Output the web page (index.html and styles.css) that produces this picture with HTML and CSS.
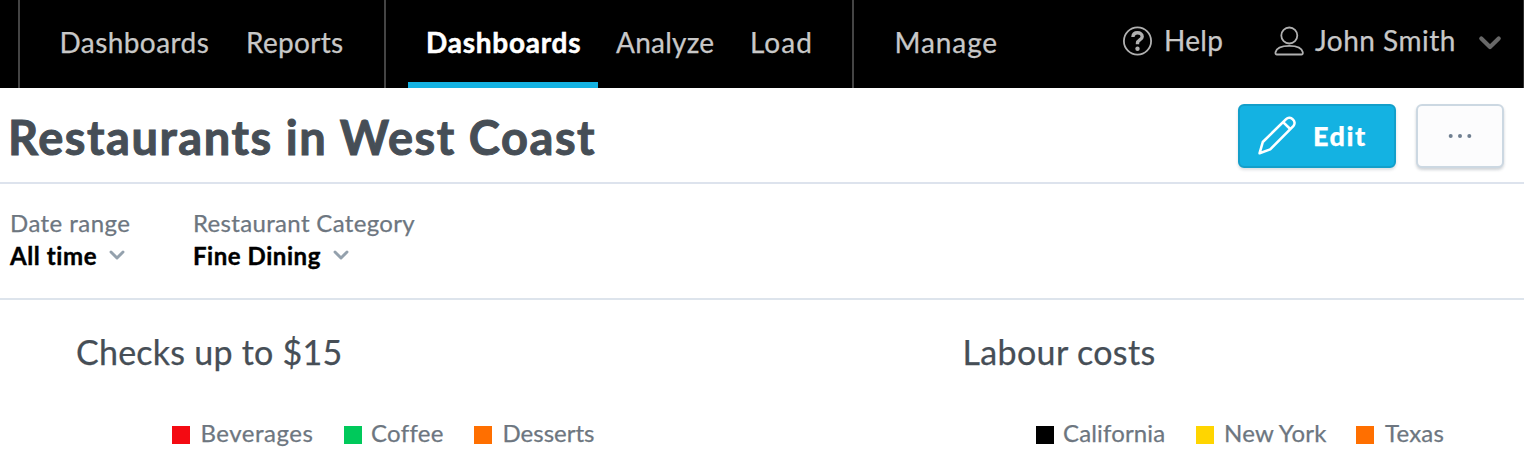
FILE: index.html
```html
<!DOCTYPE html>
<html lang="en">
<head>
<meta charset="utf-8">
<title>Restaurants in West Coast</title>
<link rel="stylesheet" href="styles.css">
</head>
<body>
<header class="topbar">
  <nav class="group group-first">
    <a class="nav-item w-dash"><span class="t-dash">Dashboards</span></a>
    <a class="nav-item w-reports"><span class="t-reports">Reports</span></a>
  </nav>
  <nav class="group group-main">
    <a class="nav-item w-active active"><span class="t-active">Dashboards</span></a>
    <a class="nav-item w-analyze"><span class="t-analyze">Analyze</span></a>
    <a class="nav-item w-load"><span class="t-load">Load</span></a>
  </nav>
  <nav class="group group-manage">
    <a class="nav-item"><span class="t-manage">Manage</span></a>
  </nav>
  <div class="account">
    <a class="help">
      <svg class="icon-help" width="30" height="30" viewBox="0 0 30 30" fill="none" stroke="#b0b0b0">
        <circle cx="14.500" cy="15" r="13.6" stroke-width="1.8"/>
        <path d="M9.900 11c.2-2.800 2-4.200 4.600-4.200s4.700 1.400 4.700 3.900c0 3.200-4.700 3.200-4.700 6.200v1.300" stroke-width="3.400"/>
        <circle cx="14.500" cy="22.700" r="2.200" fill="#b0b0b0" stroke="none"/>
      </svg>
      <span class="t-help">Help</span>
    </a>
    <a class="user">
      <svg class="icon-user" width="30" height="30" viewBox="0 0 30 30" fill="none" stroke="#b0b0b0" stroke-width="1.800">
        <circle cx="15.300" cy="9.500" r="8"/>
        <path d="M3 28.500c-1.200 0-1.700-.9-1.500-2.200C2.400 21.900 7.600 19.800 15.300 19.800s12.600 2.100 13.500 6.500c.2 1.300-.3 2.200-1.500 2.200z"/>
      </svg>
      <span class="t-user">John Smith</span>
      <svg class="icon-caret" width="24" height="16" viewBox="0 0 24 16" fill="none" stroke="#686868" stroke-width="4.200" stroke-linecap="round" stroke-linejoin="round"><path d="M3.300 3.500 12 12l8.700-8.500"/></svg>
    </a>
  </div>
</header>
<section class="titlebar">
  <h1 class="title">Restaurants in West Coast</h1>
  <div class="actions">
    <button class="btn btn-edit">
      <svg class="icon-pencil" width="40" height="40" viewBox="0 0 40 40" fill="none" stroke="#fff" stroke-width="2.600" stroke-linejoin="round"><path d="M1.600 37.200l3.200-11.200L28.100 3.100c4.300-4 11.200 2.400 7.200 7L12.200 33.400z"/><path d="M25.100 6.100l7.400 7.200"/></svg>
      <span class="t-edit">Edit</span>
    </button>
    <button class="btn btn-more" aria-label="More">
      <svg width="24" height="6" viewBox="0 0 24 6" fill="#6f7f90"><circle cx="2.700" cy="3" r="2"/><circle cx="12" cy="3" r="2"/><circle cx="21.300" cy="3" r="2"/></svg>
    </button>
  </div>
</section>
<section class="filters">
  <div class="filter filter-date">
    <span class="label t-date">Date range</span>
    <span class="value"><span class="t-all">All time</span><svg class="chev" width="16" height="10" viewBox="0 0 16 10"><path d="M2 2l6 6 6-6"/></svg></span>
  </div>
  <div class="filter">
    <span class="label t-cat">Restaurant Category</span>
    <span class="value"><span class="t-fine">Fine Dining</span><svg class="chev" width="16" height="10" viewBox="0 0 16 10"><path d="M2 2l6 6 6-6"/></svg></span>
  </div>
</section>
<main class="widgets">
  <article class="widget checks">
    <h2 class="heading t-checks">Checks up to $15</h2>
    <ul class="legend">
      <li class="k-bev"><i class="swatch red"></i><span class="t-bev">Beverages</span></li>
      <li class="k-cof"><i class="swatch green"></i><span class="t-cof">Coffee</span></li>
      <li><i class="swatch orange"></i><span class="t-des">Desserts</span></li>
    </ul>
  </article>
  <article class="widget labour">
    <h2 class="heading t-labour">Labour costs</h2>
    <ul class="legend">
      <li class="k-cal"><i class="swatch black"></i><span class="t-cal">California</span></li>
      <li class="k-ny"><i class="swatch yellow"></i><span class="t-ny">New York</span></li>
      <li><i class="swatch orange"></i><span class="t-tex">Texas</span></li>
    </ul>
  </article>
</main>
</body>
</html>
```
FILE: styles.css
```css
* { box-sizing: border-box; }
body { margin: 0; height: 456px; overflow: hidden; background: #fff; font-family: Lato, "Open Sans", sans-serif; white-space: nowrap; font-variant-ligatures: none; -webkit-text-stroke: .25px; }
h1, h2, ul { margin: 0; padding: 0; font-weight: inherit; }
svg { flex: none; display: block; }

.topbar { display: flex; height: 88px; padding-left: 18px; background: #000; color: #c8c8c8; font-size: 28px; line-height: 34px; border-right: 1px solid #303030; }
.group { display: flex; flex: none; border-left: 2px solid #444; }
.group-first { width: 366px; padding-left: 22px; }
.group-main { width: 468px; padding-left: 22px; }
.group-manage { width: 250px; padding-left: 23px; }
.nav-item { display: flex; flex: none; height: 88px; padding: 25px 0 0 18px; }
.w-dash { width: 186px; }
.w-dash, .group-manage .nav-item { padding-left: 17.5px; }
.w-active { width: 190px; }
.w-analyze { width: 134px; }
.active { color: #fff; font-weight: 700; border-bottom: 6px solid #14b2e2; -webkit-text-stroke: .5px; }
.t-dash { letter-spacing: .42px; }
.t-reports { letter-spacing: .3px; }
.t-active { letter-spacing: .75px; }
.t-analyze { letter-spacing: .25px; }
.t-load { letter-spacing: 1px; }
.t-manage { letter-spacing: .9px; }
.account { display: flex; flex: 1; padding: 23px 0 0 21px; }
.help { display: flex; width: 151px; }
.user { display: flex; }
.icon-help, .icon-user { margin: 3px 11px 0 0; }
.t-help { letter-spacing: .3px; }
.t-user { width: 164px; letter-spacing: .5px; }
.icon-caret { margin-top: 12px; margin-left: -1px; }

.titlebar { display: flex; justify-content: space-between; height: 96px; padding: 16px 20px 0 8px; border-bottom: 2px solid #dde3ed; }
.title { color: #464e56; font-size: 47px; font-weight: 700; line-height: 66px; letter-spacing: 1.55px; -webkit-text-stroke: 1px; }
.actions { display: flex; gap: 20px; }
.btn { display: flex; align-items: center; height: 64px; border-radius: 6px; font: inherit; padding: 0; }
.btn-edit { width: 158px; padding-left: 18px; background: #14b2e2; border: 2px solid #139fca; color: #fff; font-size: 27px; font-weight: 900; box-shadow: 0 2px 3px rgba(20, 40, 60, .15); }
.icon-pencil { margin-right: 15px; }
.t-edit { padding-bottom: 2px; letter-spacing: 1.5px; }
.btn-more { width: 88px; justify-content: center; background: #fcfcfd; border: 2px solid #ccd8e2; box-shadow: 0 2px 3px rgba(20, 40, 60, .2); }

.filters { display: flex; height: 116px; padding: 23px 0 0 10px; border-bottom: 2px solid #dde4ec; font-size: 24px; line-height: 32px; }
.filter { display: flex; flex-direction: column; }
.filter-date { width: 183px; }
.label { height: 33px; color: #6d7680; }
.value { display: flex; color: #000; font-weight: 700; -webkit-text-stroke: .4px; }
.t-date { letter-spacing: .45px; }
.t-cat { letter-spacing: .33px; }
.t-all { width: 99px; letter-spacing: .6px; }
.t-fine { width: 140px; letter-spacing: .55px; }
.chev { margin-top: 10px; fill: none; stroke: #94a1ad; stroke-width: 2.9; stroke-linecap: round; stroke-linejoin: round; }

.widgets { display: flex; }
.checks { width: 887px; padding-left: 76px; }
.labour { padding-left: 75.5px; }
.heading { padding-top: 31px; color: #464e56; font-size: 34px; line-height: 42px; }
.t-checks { letter-spacing: .24px; }
.t-labour { letter-spacing: .35px; }
.legend { display: flex; list-style: none; padding-top: 44px; color: #6d7680; font-size: 24px; line-height: 32px; }
.checks .legend { padding-left: 96px; }
.labour .legend { padding-left: 73.5px; }
.legend li { display: flex; }
.swatch { width: 18px; height: 18px; margin: 9px 10.5px 0 0; }
.labour .swatch { margin-right: 9px; }
.k-bev { width: 172px; }
.k-cof { width: 130px; }
.k-cof .swatch { margin-right: 9px; }
.k-cal, .k-ny { width: 160px; }
.t-bev { letter-spacing: .5px; }
.t-cof { letter-spacing: .3px; }
.t-cal { letter-spacing: .15px; }
.t-ny { padding-left: 1px; letter-spacing: .2px; }
.t-tex { padding-left: 2px; letter-spacing: .2px; }
.red { background: #f40a12; }
.green { background: #00c95b; }
.orange { background: #ff6f00; }
.black { background: #000; }
.yellow { background: #ffd500; }
```
